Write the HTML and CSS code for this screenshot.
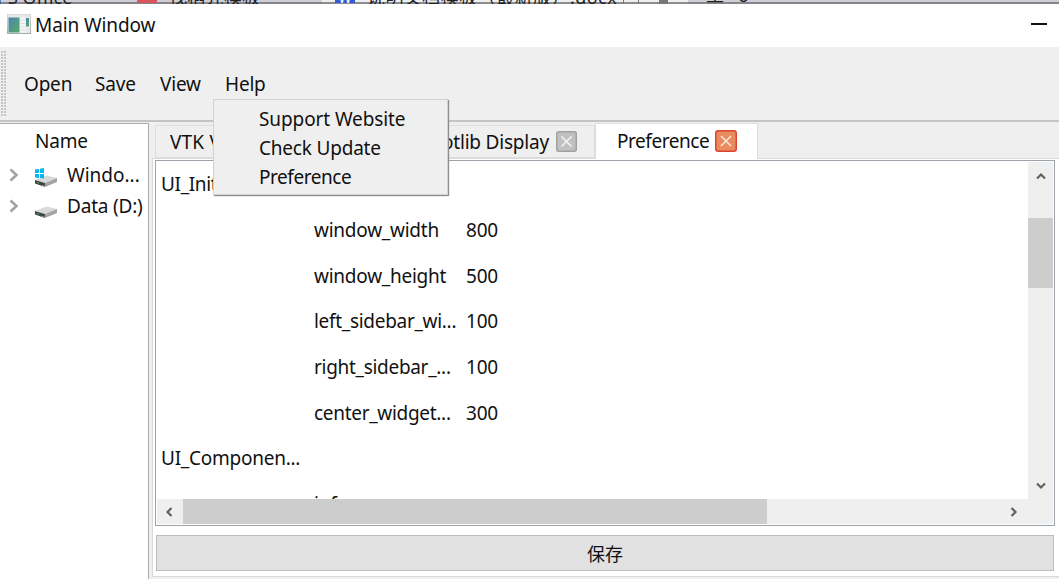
FILE: index.html
```
<!DOCTYPE html>
<html lang="en">
<head>
<meta charset="utf-8">
<title>Main Window</title>
<link rel="stylesheet" href="styles.css">
</head>
<body>
<div class="desktop">
  <div class="backdrop">
    <div class="back-tab back-first"><span>PS Office</span></div>
    <div class="back-tab back-second"><i class="back-icon red"></i><span>找稻壳模板</span></div>
    <div class="back-tab back-third"><i class="back-icon blue">W</i><span>说明文档模板（最新版）.docx</span><i class="back-box"></i><i class="back-dot"></i></div>
    <div class="back-tab back-last"><span>工</span><span>ο</span></div>
  </div>
  <header class="titlebar">
    <svg class="app-icon" width="24" height="20" viewBox="0 0 24 20">
      <defs>
        <linearGradient id="app" x1="0" y1="0" x2="1" y2="1"><stop offset="0" stop-color="#4b83ad"/><stop offset="1" stop-color="#55ae68"/></linearGradient>
        <linearGradient id="frame" x1="0" y1="0" x2="0" y2="1"><stop offset="0" stop-color="#d9dcdd"/><stop offset="1" stop-color="#a9aaab"/></linearGradient>
      </defs>
      <rect x=".5" y=".5" width="23" height="19" fill="#e7e9e9" stroke="url(#frame)"/>
      <rect x="1.5" y="3.500" width="11" height="15" fill="url(#app)"/>
      <rect x="13.500" y="3.500" width="5" height="15" fill="#f5f5f5"/>
      <path d="M14 6h4M14 9.500h4M14 13h4M14 16h4" stroke="#dcdddd"/>
      <rect x="19" y="4" width="3" height="8.500" fill="url(#app)"/>
    </svg>
    <span class="title">Main Window</span>
    <span class="minimize"></span>
  </header>
  <nav class="toolbar">
    <i class="grip"></i>
    <span class="action open">Open</span>
    <span class="action save">Save</span>
    <span class="action view">View</span>
    <span class="action help">Help</span>
    <div class="menu">
      <span class="m1">Support Website</span>
      <span class="m2">Check Update</span>
      <span class="m3">Preference</span>
    </div>
  </nav>
  <div class="body">
    <aside class="sidebar">
      <div class="tree-head">Name</div>
      <div class="drive">
        <svg class="arrow" width="10" height="14" viewBox="0 0 10 14"><path d="M1.500 1.500 7.500 7l-6 5.500" fill="none" stroke="#a3a3a3" stroke-width="2.600"/></svg>
        <svg class="disk" width="23" height="19" viewBox="0 0 23 19">
          <path d="M0 12 11.500 7.500 22 10 10 15z" fill="#d8d9da"/><path d="M0 12l10 3v4L0 15.500z" fill="#424744"/><path d="M10 15 22 10v4L10 19z" fill="#a2a4a6"/><path d="M7 17l3 1v1l-3-.9z" fill="#a5a8a8"/><path d="M2 14.500l2 .7" stroke="#3fae58"/>
          <path d="M0 1.500 4 1v4H0zM5 .8 9 0v5H5zM0 6h4v4l-4-.5zM5 6h4v4.500l-4-.5z" fill="#08b7ed"/>
        </svg>
        <span class="d1">Windo...</span>
      </div>
      <div class="drive">
        <svg class="arrow" width="10" height="14" viewBox="0 0 10 14"><path d="M1.500 1.500 7.500 7l-6 5.500" fill="none" stroke="#a3a3a3" stroke-width="2.600"/></svg>
        <svg class="disk" width="23" height="19" viewBox="0 0 23 19">
          <path d="M0 12 11.500 7.500 22 10 10 15z" fill="#d8d9da"/><path d="M0 12l10 3v4L0 15.500z" fill="#424744"/><path d="M10 15 22 10v4L10 19z" fill="#a2a4a6"/><path d="M7 17l3 1v1l-3-.9z" fill="#a5a8a8"/><path d="M2 14.500l2 .7" stroke="#3fae58"/>
        </svg>
        <span class="d2">Data (D:)</span>
      </div>
    </aside>
    <main class="center">
      <div class="tabs">
        <div class="tab vtk">VTK View</div>
        <div class="tab plot"><span>Matplotlib Display</span><svg class="close" width="21" height="21" viewBox="0 0 21 21"><rect x=".75" y=".75" width="19.500" height="19.500" rx="2" fill="#c1c1c1" stroke="#a1a1a1" stroke-width="1.500"/><path d="M5.500 5.500l10 10M15.500 5.500l-10 10" stroke="#f4f4f4" stroke-width="1.500"/></svg></div>
        <div class="tab active"><span class="pref">Preference</span><svg class="close" width="22" height="22" viewBox="0 0 22 22"><rect x=".75" y=".75" width="20.500" height="20.500" rx="2.500" fill="#e98b5d" stroke="#dc4433" stroke-width="1.500"/><path d="M6 6l10 10M16 6 6 16" stroke="#fbe9df" stroke-width="1.500"/></svg></div>
      </div>
      <section class="pane">
        <div class="table">
          <div class="rows">
            <div class="row"><span class="k0">UI_Init</span></div>
            <div class="row"><span></span><span class="k1">window_width</span><span class="num">800</span></div>
            <div class="row"><span></span><span class="k2">window_height</span><span class="num">500</span></div>
            <div class="row"><span></span><span class="k3">left_sidebar_wi...</span><span class="num">100</span></div>
            <div class="row"><span></span><span class="k4">right_sidebar_...</span><span class="num">100</span></div>
            <div class="row"><span></span><span class="k5">center_widget...</span><span class="num">300</span></div>
            <div class="row"><span class="k6">UI_Componen...</span></div>
            <div class="row"><span></span><span class="k7">info</span></div>
          </div>
          <div class="vbar">
            <svg width="10" height="8" viewBox="0 0 10 8"><path d="M1 6.500 5 2.500l4 4" fill="none" stroke="#616161" stroke-width="2.200"/></svg>
            <i></i>
            <svg width="10" height="8" viewBox="0 0 10 8"><path d="M1 1.500l4 4 4-4" fill="none" stroke="#616161" stroke-width="2.200"/></svg>
          </div>
          <div class="hbar">
            <svg width="8" height="10" viewBox="0 0 8 10"><path d="M6.500 1 2.500 5l4 4" fill="none" stroke="#616161" stroke-width="2.200"/></svg>
            <i></i>
            <svg width="8" height="10" viewBox="0 0 8 10"><path d="M1.500 1l4 4-4 4" fill="none" stroke="#616161" stroke-width="2.200"/></svg>
          </div>
        </div>
        <div class="button">保存</div>
      </section>
    </main>
  </div>
</div>
</body>
</html>
```

FILE: styles.css
```
* { box-sizing: border-box; }
body { margin: 0; background: #fff; color: #111; font: 19px/28px "Noto Sans", "Noto Sans CJK SC", sans-serif; letter-spacing: -.2px; white-space: nowrap; }
svg { display: block; flex: none; }
i { font-style: normal; flex: none; }
.desktop { width: 1059px; height: 580px; display: flex; flex-direction: column; overflow: hidden; }
.backdrop { height: 4px; flex: none; display: flex; overflow: hidden; background: linear-gradient(#cfced8 2px, #85858b 2px); font: 18px/20px "Noto Sans", "Noto Sans CJK SC", sans-serif; letter-spacing: 0; color: #222; }
.back-tab { height: 20px; margin-top: -13px; display: flex; flex: none; }
.back-first { width: 137px; }
.back-first span { margin-left: -3px; }
.back-second { width: 185px; }
.back-second span { letter-spacing: .3px; }
.back-third { width: 366px; background: linear-gradient(#efeff2 15px, #8d8d90 15px); padding-left: 13px; }
.back-third span { letter-spacing: .45px; }
.back-last { padding-left: 18px; gap: 14px; }
.back-last span { margin-top: -2px; }
.back-icon { width: 20px; height: 16px; margin-right: 12px; }
.red { background: #d8565b; }
.blue { background: #345bd5; color: #fff; font-size: 14px; line-height: 22px; text-align: center; }
.back-box { width: 16px; height: 20px; margin-left: 6px; border: solid #777; border-width: 0 1px; }
.back-dot { width: 9px; height: 20px; margin-left: 20px; background: #777; }
.titlebar { height: 43px; flex: none; display: flex; align-items: center; padding: 0 12px 2px 7px; }
.app-icon { margin-top: -1px; }
.title { margin-left: 4px; letter-spacing: -.1px; }
.minimize { width: 16px; height: 2px; margin: -1px 0 0 auto; background: #111; }
.toolbar { position: relative; height: 75px; flex: none; display: flex; align-items: center; background: #efefef; border-bottom: 2px solid #c4c4c4; }
.grip { width: 5px; height: 66px; margin: 0 18px 0 1px; background: radial-gradient(circle at 1px 1px, #c5c5c5 .8px, transparent 1px) 0 0 / 3px 3px; }
.action { flex: none; padding-top: 1px; }
.open { width: 71px; } .save { width: 65px; } .view { width: 65px; }
.menu { position: absolute; z-index: 5; left: 213px; top: 52px; width: 235px; height: 96px; padding: 5px 0 0 45px; display: flex; flex-direction: column; background: #efefef; border: 1px solid #d2d2d2; box-shadow: 1px 1px 1px #8f8f8f; }
.menu span { height: 29px; flex: none; align-self: flex-start; }
.m1 { letter-spacing: -.1px; }
.m3, .pref { letter-spacing: -.45px; }
.body { height: 457px; flex: none; display: flex; background: #efefef; }
.sidebar { width: 149px; flex: none; margin-top: 1px; background: #fff; border-top: 1px solid #aaadb4; border-right: 1px solid #a7abb2; }
.tree-head { height: 36px; padding: 3px 0 0 35px; }
.drive { height: 30.5px; display: flex; align-items: center; padding-left: 9px; }
.d1 { letter-spacing: 0; }
.disk { margin: 5px 9px 0 16px; }
.center { flex: 1; padding: 1px 0 2px 3px; display: flex; flex-direction: column; min-width: 0; }
.tabs { height: 35px; flex: none; display: flex; align-items: flex-end; padding-left: 3px; }
.tab { height: 33px; display: flex; align-items: center; flex: none; border: 1px solid #dedede; }
.vtk { width: 144px; padding-left: 14px; letter-spacing: .2px; }
.plot { width: 296px; justify-content: flex-end; padding-right: 17px; gap: 7px; }
.active { width: 163px; height: 36px; padding-left: 21px; background: #fff; border-bottom: 0; margin-bottom: -1px; position: relative; gap: 6px; padding-bottom: 1px; }
.pane { height: 419px; flex: none; background: #fff; border: solid #d9d9d9; border-width: 1px 0 1px 1px; padding: 1px 4px 5px 2px; display: flex; flex-direction: column; gap: 9px; }
.table { height: 366px; flex: none; border: 1px solid #9ca2a9; display: grid; grid-template: 337px 25px / 1fr 25px; padding: 1px; }
.rows { overflow: hidden; }
.row { height: 45.65px; display: grid; grid-template-columns: 152px 152px 1fr; align-items: center; padding: 0 0 1px 5px; }
.row span { justify-self: start; }
.k0 { letter-spacing: -.35px; margin-left: -1px; }
.k6 { margin-left: -1px; }
.k1, .k2, .k6 { letter-spacing: -.25px; }
.k3, .k4, .k5 { letter-spacing: -.3px; }
.vbar, .hbar { background: #efefef; display: flex; align-items: center; }
.vbar { flex-direction: column; padding: 10px 0 9px; }
.vbar i { width: 25px; height: 70px; margin-top: 38px; background: #cdcdcd; }
.vbar svg:last-child { margin-top: auto; }
.hbar { grid-column: 1 / 3; padding: 0 35px 0 8px; }
.hbar i { width: 584px; height: 25px; margin-left: 10px; background: #cdcdcd; }
.hbar svg:last-child { margin-left: auto; }
.button { height: 36px; flex: none; margin: 0 1px; display: flex; justify-content: center; align-items: center; background: #e1e1e1; border: 1px solid #bdbdbd; font: 18px/26px "Noto Sans CJK SC", sans-serif; letter-spacing: 0; padding-bottom: 1px; }
```
